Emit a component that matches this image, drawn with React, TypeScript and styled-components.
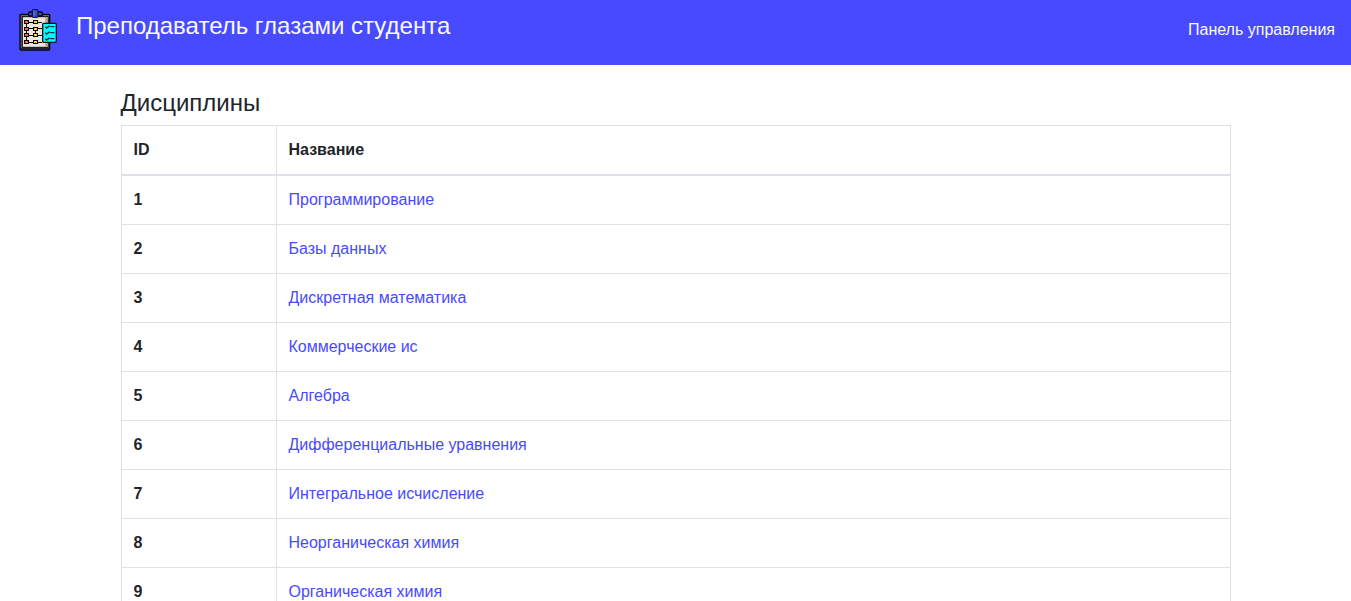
import React from "react";
import styled, { createGlobalStyle } from "styled-components";

const GlobalStyle = createGlobalStyle`
  *, *::before, *::after { box-sizing: border-box; }
  body {
    margin: 0;
    background: #fff;
    color: #212529;
    font-family: "Liberation Sans", Arial, sans-serif;
    font-size: 16px;
    line-height: 24px;
  }
`;

const Header = styled.header`
  display: flex;
  align-items: flex-start;
  justify-content: space-between;
  padding: 8px 16px 13px;
  background: #484aff;
`;

const Brand = styled.a`
  display: flex;
  align-items: flex-start;
  gap: 16px;
  color: #f8f9fa;
  text-decoration: none;
`;

const Logo = styled.svg`
  display: block;
  flex: none;
  width: 44px;
  height: 44px;
`;

const SiteName = styled.span`
  font-size: 24px;
  line-height: 36px;
`;

const Nav = styled.nav`
  padding: 10px 0;
`;

const NavLink = styled.a`
  color: #f8f9fa;
  text-decoration: none;
`;

const Container = styled.main`
  width: 100%;
  max-width: 1140px;
  margin: 0 auto;
  padding: 24px 15px 0;
`;

const Title = styled.h1`
  margin: 0 0 8px;
  font-size: 24px;
  font-weight: 500;
  line-height: 28px;
`;

const Table = styled.table`
  width: 100%;
  margin-bottom: 16px;
  border: 1px solid #dee2e6;
  border-collapse: collapse;
`;

const Cell = styled.td`
  padding: 12px;
  border: 1px solid #dee2e6;
  text-align: left;
  vertical-align: top;
`;

const HeadCell = styled(Cell)<{ $width?: string }>`
  width: ${({ $width }) => $width ?? "auto"};
  border-bottom-width: 2px;
  font-weight: 700;
`;

const RowHead = styled(Cell)`
  font-weight: 700;
`;

const SubjectLink = styled.a`
  color: #484aff;
  text-decoration: none;
  &:hover { text-decoration: underline; }
`;

const subjects = [
  "Программирование",
  "Базы данных",
  "Дискретная математика",
  "Коммерческие ис",
  "Алгебра",
  "Дифференциальные уравнения",
  "Интегральное исчисление",
  "Неорганическая химия",
  "Органическая химия",
];

const nodeRows = [54, 75, 93, 114];
const checkRows = [68, 86, 104];

function ClipboardLogo() {
  return (
    <Logo viewBox="12 12 132 132" aria-hidden="true">
      {/* Board and sheet */}
      <rect x="24" y="31" width="89" height="107" rx="3" fill="#68656b" stroke="#050510" strokeWidth="4" />
      <path d="M26 132h86v5H26z" fill="#22222b" />
      <rect x="31" y="38" width="77" height="92" fill="#ebe5dc" stroke="#08080c" strokeWidth="3" />
      <path d="M99 39h8v90h-8z" fill="#c0ab94" />
      {/* Clip */}
      <rect x="50" y="24" width="41" height="12" rx="3" fill="#3d4ec5" stroke="#050515" strokeWidth="4" />
      <rect x="61" y="17" width="17" height="23" rx="2" fill="#3d4ec5" stroke="#050515" strokeWidth="3" />
      <path d="M63 19h5v19h-5z" fill="#5365e4" />
      {/* Linked nodes */}
      <path d="M43.5 54V114M70.5 75V93M43 55.5H90M43 73.5H90M43 94.5H90M43 115.5H90" fill="none" stroke="#08080c" strokeWidth="3" />
      {nodeRows.map((y) => (
        <g key={y} stroke="#08080c" strokeWidth="3">
          <rect x="37.5" y={y - 4.5} width="12" height="9" fill="#f5624b" />
          <rect x="64.5" y={y - 4.5} width="12" height="9" fill="#f5d92e" />
        </g>
      ))}
      {/* Checklist card */}
      <rect x="92" y="58" width="41" height="57" rx="3" fill="#00ffff" stroke="#03131c" strokeWidth="4" />
      {checkRows.map((y) => (
        <path
          key={y}
          d={`M100 ${y}l4 4l9-7M115 ${y}h12`}
          fill="none"
          stroke="#03242d"
          strokeWidth="4"
        />
      ))}
    </Logo>
  );
}

export default function App() {
  return (
    <>
      <GlobalStyle />
      <Header>
        <Brand href="#">
          <ClipboardLogo />
          <SiteName>Преподаватель глазами студента</SiteName>
        </Brand>
        <Nav>
          <NavLink href="#">Панель управления</NavLink>
        </Nav>
      </Header>
      <Container>
        <Title>Дисциплины</Title>
        <Table>
          <thead>
            <tr>
              <HeadCell as="th" scope="col" $width="155px">ID</HeadCell>
              <HeadCell as="th" scope="col">Название</HeadCell>
            </tr>
          </thead>
          <tbody>
            {subjects.map((name, i) => (
              <tr key={name}>
                <RowHead as="th" scope="row">{i + 1}</RowHead>
                <Cell>
                  <SubjectLink href="#">{name}</SubjectLink>
                </Cell>
              </tr>
            ))}
          </tbody>
        </Table>
      </Container>
    </>
  );
}
